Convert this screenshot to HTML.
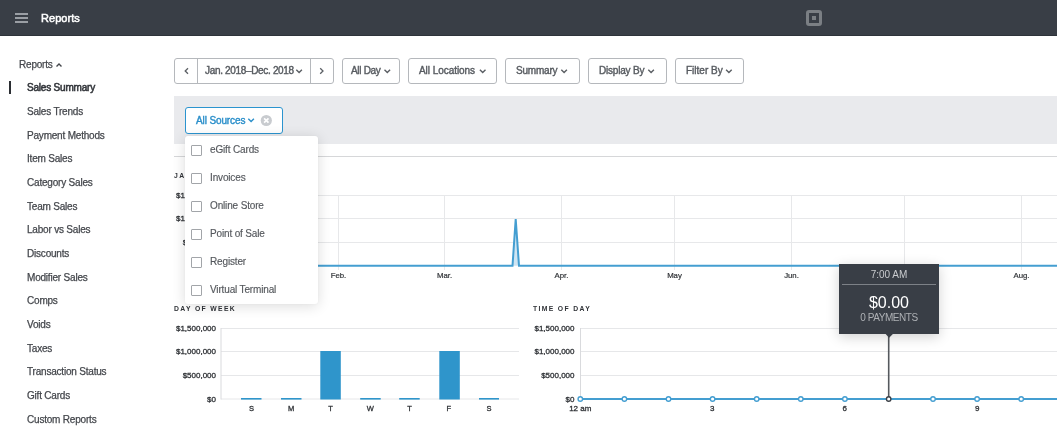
<!DOCTYPE html>
<html><head><meta charset="utf-8">
<style>
*{box-sizing:border-box;margin:0;padding:0}
html,body{width:1057px;height:433px;overflow:hidden;background:#fff;-webkit-font-smoothing:antialiased;font-family:"Liberation Sans",sans-serif;color:#3d3f42}
.abs{position:absolute}
#hdr{position:absolute;left:0;top:0;width:1057px;height:36px;background:#393e46;border-bottom:1px solid #2e333a}
#hdr .t{position:absolute;left:41px;top:12px;font-size:11px;line-height:12px;color:#fff;letter-spacing:0.05px;-webkit-text-stroke:0.5px #fff}
.side{position:absolute;left:27px;font-size:10px;line-height:12px;color:#44474c;white-space:nowrap;letter-spacing:-0.2px;-webkit-text-stroke:0.25px currentColor}
.btn{position:absolute;top:58px;height:26px;border:1px solid #b5b8bc;border-radius:3px;font-size:10px;color:#5b5f64;white-space:nowrap;line-height:24px;background:#fff;padding-left:9px}
.chev{display:inline-block;width:4px;height:4px;border-right:1.3px solid #5b5f64;border-bottom:1.3px solid #5b5f64;transform:rotate(45deg);margin-left:4px;position:relative;top:-2px}
.bt{position:absolute;top:65px;font-size:10px;line-height:12px;color:#575b60;white-space:nowrap;-webkit-text-stroke:0.4px currentColor}
.dd{position:absolute;left:210px;font-size:10px;line-height:12px;color:#55585d;white-space:nowrap;letter-spacing:-0.15px;-webkit-text-stroke:0.15px currentColor}
.cb{position:absolute;left:191px;width:11px;height:11px;border:1px solid #a2a5a9;border-radius:1px;background:#fff}
.abs,.side,.bt,.dd,.btn,#hdr .t{will-change:transform}</style></head><body>
<div id="hdr">
  <div class="abs" style="left:15px;top:13px;width:13px;height:2px;background:#9a9ea4"></div>
  <div class="abs" style="left:15px;top:17px;width:13px;height:2px;background:#9a9ea4"></div>
  <div class="abs" style="left:15px;top:21px;width:13px;height:2px;background:#9a9ea4"></div>
  <div class="t">Reports</div>
  <div class="abs" style="left:806px;top:10px;width:16px;height:16px;border:3px solid #7b7f84;border-radius:3px"></div>
  <div class="abs" style="left:812px;top:16px;width:4px;height:4px;background:#7b7f84"></div>
</div>

<!-- sidebar -->
<div class="side" style="left:19px;top:59px">Reports</div>
<svg class="abs" style="left:55px;top:61px" width="8" height="8"><path d="M1.5 5.5 L4 3 L6.5 5.5" fill="none" stroke="#43464b" stroke-width="1.4"/></svg>
<div class="abs" style="left:9px;top:81px;width:2px;height:13px;background:#2b2e33"></div>
<div class="side" style="top:82px;color:#33363b;letter-spacing:-0.2px;-webkit-text-stroke:0.55px #33363b">Sales Summary</div>
<div class="side" style="top:106px">Sales Trends</div>
<div class="side" style="top:130px">Payment Methods</div>
<div class="side" style="top:153px">Item Sales</div>
<div class="side" style="top:177px">Category Sales</div>
<div class="side" style="top:201px">Team Sales</div>
<div class="side" style="top:224px">Labor vs Sales</div>
<div class="side" style="top:248px">Discounts</div>
<div class="side" style="top:272px">Modifier Sales</div>
<div class="side" style="top:295px">Comps</div>
<div class="side" style="top:319px">Voids</div>
<div class="side" style="top:343px">Taxes</div>
<div class="side" style="top:366px">Transaction Status</div>
<div class="side" style="top:390px">Gift Cards</div>
<div class="side" style="top:414px">Custom Reports</div>

<!-- toolbar -->
<div class="btn" style="left:174px;width:160px"></div>
<div class="abs" style="left:197px;top:58px;width:1px;height:26px;background:#b5b8bc"></div>
<div class="abs" style="left:310px;top:58px;width:1px;height:26px;background:#b5b8bc"></div>
<svg class="abs" style="left:182px;top:67px" width="8" height="8"><path d="M6 1.2 L3.2 4 L6 6.8" fill="none" stroke="#5b5f64" stroke-width="1.3"/></svg>
<svg class="abs" style="left:318px;top:67px" width="8" height="8"><path d="M2.2 1.2 L5 4 L2.2 6.8" fill="none" stroke="#5b5f64" stroke-width="1.3"/></svg>
<div class="btn" style="left:342px;width:58px"></div>
<div class="btn" style="left:408px;width:89px"></div>
<div class="btn" style="left:505px;width:75px"></div>
<div class="btn" style="left:588px;width:79px"></div>
<div class="btn" style="left:675px;width:69px"></div>
<div class="bt" style="left:205px;letter-spacing:-0.33px">Jan. 2018–Dec. 2018</div>
<div class="bt" style="left:351px;letter-spacing:-0.3px">All Day</div>
<div class="bt" style="left:418.5px;letter-spacing:-0.05px">All Locations</div>
<div class="bt" style="left:516.3px;letter-spacing:-0.2px">Summary</div>
<div class="bt" style="left:599px;letter-spacing:-0.2px">Display By</div>
<div class="bt" style="left:685.8px;letter-spacing:0px">Filter By</div>
<svg class="abs" style="left:0;top:0" width="760" height="140">
 <g fill="none" stroke="#5b5f64" stroke-width="1.4">
  <path d="M296.3 69.8 L299.1 72.6 L301.9 69.8"/>
  <path d="M384.5 69.8 L387.3 72.6 L390.1 69.8"/>
  <path d="M479.9 69.8 L482.7 72.6 L485.5 69.8"/>
  <path d="M561.3 69.8 L564.1 72.6 L566.9 69.8"/>
  <path d="M648.3 69.8 L651.1 72.6 L653.9 69.8"/>
  <path d="M726.1 69.8 L728.9 72.6 L731.7 69.8"/>
 </g>
</svg>

<!-- filter band -->
<div class="abs" style="left:174px;top:96px;width:883px;height:48px;background:#e9eaed"></div>
<div class="abs" style="left:185px;top:107px;width:98px;height:27px;border:1px solid #2b94cf;border-radius:3px;background:#fff"></div>
<div class="bt" style="left:196px;top:115px;color:#2b8fca;letter-spacing:-0.12px">All Sources</div>
<svg class="abs" style="left:246px;top:116px" width="10" height="8"><path d="M2.3 2.8 L5.1 5.6 L7.9 2.8" fill="none" stroke="#2b8fca" stroke-width="1.4"/></svg>
<svg class="abs" style="left:260px;top:114px" width="13" height="13"><circle cx="6.3" cy="6.5" r="5.6" fill="#c8cbcf"/><path d="M4.1 4.3 L8.5 8.7 M8.5 4.3 L4.1 8.7" stroke="#fff" stroke-width="1.7"/></svg>

<!-- chart area -->
<svg class="abs" style="left:0;top:0" width="1057" height="433">
  <line x1="174" y1="156.5" x2="1057" y2="156.5" stroke="#d6d7d9" stroke-width="1"/>
  <!-- big chart grid -->
  <g stroke="#e7e8ea" stroke-width="1">
    <line x1="221" y1="195.5" x2="1057" y2="195.5"/>
    <line x1="221" y1="218.5" x2="1057" y2="218.5"/>
    <line x1="221" y1="242.5" x2="1057" y2="242.5"/>
    <line x1="338.5" y1="195" x2="338.5" y2="270"/>
    <line x1="444.5" y1="195" x2="444.5" y2="270"/>
    <line x1="561.5" y1="195" x2="561.5" y2="270"/>
    <line x1="674.5" y1="195" x2="674.5" y2="270"/>
    <line x1="791.5" y1="195" x2="791.5" y2="270"/>
    <line x1="904.5" y1="195" x2="904.5" y2="270"/>
    <line x1="1021.5" y1="195" x2="1021.5" y2="270"/>
  </g>
  <path d="M512.5 265.8 L515.7 219 L519 265.8 Z" fill="#cfe5f3"/>
  <polyline points="221,265.8 512.5,265.8 515.7,219 519,265.8 1057,265.8" fill="none" stroke="#449ed1" stroke-width="2"/>
  <g font-family="Liberation Sans" font-size="7.8" fill="#2f3236" text-anchor="middle" stroke="#2f3236" stroke-width="0.2">
    <text x="338.5" y="278">Feb.</text>
    <text x="444.5" y="278">Mar.</text>
    <text x="561.5" y="278">Apr.</text>
    <text x="674.5" y="278">May</text>
    <text x="791.5" y="278">Jun.</text>
    <text x="904.5" y="278">Jul.</text>
    <text x="1021.5" y="278">Aug.</text>
  </g>
  <g font-family="Liberation Sans" font-size="8" fill="#2f3236" text-anchor="end" stroke="#2f3236" stroke-width="0.3">
    <text x="216" y="198">$1,500,000</text>
    <text x="216" y="221">$1,000,000</text>
    <text x="216" y="245">$500,000</text>
    <text x="216" y="268">$0</text>
  </g>
  <text x="174" y="178" font-family="Liberation Sans" font-size="6.8" font-weight="bold" fill="#303338" letter-spacing="1.35">JAN. 2018–DEC. 2018</text>

  <!-- day of week -->
  <text x="174" y="311.3" font-family="Liberation Sans" font-size="6.8" font-weight="bold" fill="#303338" letter-spacing="1.35">DAY OF WEEK</text>
  <g stroke="#e6e7e9" stroke-width="1">
    <line x1="221" y1="328.5" x2="519" y2="328.5"/>
    <line x1="221" y1="351.5" x2="519" y2="351.5"/>
    <line x1="221" y1="375.5" x2="519" y2="375.5"/>
    <line x1="221" y1="399" x2="519" y2="399"/>
  </g>
  <line x1="221" y1="328" x2="221" y2="399.5" stroke="#d9dadd" stroke-width="1"/>
  <g fill="#2f95cb">
    <rect x="241" y="398" width="20.5" height="1.6"/>
    <rect x="281" y="398" width="20.5" height="1.6"/>
    <rect x="320.3" y="351" width="20.5" height="48.5"/>
    <rect x="360.2" y="398" width="20.5" height="1.6"/>
    <rect x="399.2" y="398" width="20.5" height="1.6"/>
    <rect x="439.3" y="351" width="20.5" height="48.5"/>
    <rect x="479" y="398" width="20" height="1.6"/>
  </g>
  <g font-family="Liberation Sans" font-size="8" fill="#2f3236" text-anchor="end" stroke="#2f3236" stroke-width="0.3">
    <text x="216" y="331">$1,500,000</text>
    <text x="216" y="354">$1,000,000</text>
    <text x="216" y="378">$500,000</text>
    <text x="216" y="401.5">$0</text>
  </g>
  <g font-family="Liberation Sans" font-size="7.5" fill="#2f3236" text-anchor="middle" stroke="#2f3236" stroke-width="0.3">
    <text x="251.4" y="411">S</text>
    <text x="291.2" y="411">M</text>
    <text x="330.5" y="411">T</text>
    <text x="370.3" y="411">W</text>
    <text x="409.6" y="411">T</text>
    <text x="448.9" y="411">F</text>
    <text x="489" y="411">S</text>
  </g>

  <!-- time of day -->
  <text x="533" y="311.3" font-family="Liberation Sans" font-size="6.8" font-weight="bold" fill="#303338" letter-spacing="1.35">TIME OF DAY</text>
  <g stroke="#e6e7e9" stroke-width="1">
    <line x1="580" y1="328.5" x2="1057" y2="328.5"/>
    <line x1="580" y1="351.5" x2="1057" y2="351.5"/>
    <line x1="580" y1="375.5" x2="1057" y2="375.5"/>
  </g>
  <line x1="580.5" y1="328" x2="580.5" y2="399.5" stroke="#d9dadd" stroke-width="1"/>
  <g font-family="Liberation Sans" font-size="8" fill="#2f3236" text-anchor="end" stroke="#2f3236" stroke-width="0.3">
    <text x="574.5" y="331">$1,500,000</text>
    <text x="574.5" y="354">$1,000,000</text>
    <text x="574.5" y="378">$500,000</text>
    <text x="574.5" y="401.5">$0</text>
  </g>
  <g font-family="Liberation Sans" font-size="8" fill="#2f3236" text-anchor="middle" stroke="#2f3236" stroke-width="0.3">
    <text x="580.3" y="411">12 am</text>
    <text x="712.3" y="411">3</text>
    <text x="844.7" y="411">6</text>
    <text x="977.2" y="411">9</text>
  </g>
  <line x1="888.7" y1="334" x2="888.7" y2="399" stroke="#55595e" stroke-width="1.6"/>
  <line x1="580" y1="399" x2="1057" y2="399" stroke="#449ed1" stroke-width="2"/>
  <g fill="#fff" stroke="#449ed1" stroke-width="1.35">
    <circle cx="580.3" cy="399" r="2.25"/>
    <circle cx="624.4" cy="399" r="2.25"/>
    <circle cx="668.5" cy="399" r="2.25"/>
    <circle cx="712.6" cy="399" r="2.25"/>
    <circle cx="756.7" cy="399" r="2.25"/>
    <circle cx="800.8" cy="399" r="2.25"/>
    <circle cx="844.9" cy="399" r="2.25"/>
    <circle cx="933" cy="399" r="2.25"/>
    <circle cx="977.1" cy="399" r="2.25"/>
    <circle cx="1021.2" cy="399" r="2.25"/>
  </g>
  <circle cx="888.7" cy="399" r="2.25" fill="#fff" stroke="#3a3f46" stroke-width="1.35"/>
</svg>

<!-- tooltip -->
<div class="abs" style="left:839px;top:264px;width:100px;height:70px;background:#393e46;box-shadow:0 3px 12px rgba(0,0,0,0.18)">
  <div class="abs" style="left:0;top:4.7px;width:100px;text-align:center;font-size:10px;line-height:12px;color:#c9cbce">7:00 AM</div>
  <div class="abs" style="left:3px;top:20px;width:94px;height:1px;background:#7d8187"></div>
  <div class="abs" style="left:0;top:29.7px;width:100px;text-align:center;font-size:16px;line-height:18px;color:#fff">$0.00</div>
  <div class="abs" style="left:0;top:48px;width:100px;text-align:center;font-size:10px;line-height:12px;color:#aeb1b5;letter-spacing:-0.45px">0 PAYMENTS</div>
</div>
<svg class="abs" style="left:880px;top:330px" width="20" height="10"><path d="M5.2 3.5 L13.4 3.5 L9.1 7.8 Z" fill="#393e46"/></svg>

<!-- dropdown -->
<div class="abs" style="left:185px;top:136px;width:133px;height:167.5px;background:#fff;border-radius:3px;box-shadow:0 2px 14px rgba(0,0,0,0.14),0 0 2px rgba(0,0,0,0.06)"></div>
<div class="cb" style="top:145px"></div><div class="dd" style="top:144px">eGift Cards</div>
<div class="cb" style="top:173px"></div><div class="dd" style="top:172px">Invoices</div>
<div class="cb" style="top:201px"></div><div class="dd" style="top:200px">Online Store</div>
<div class="cb" style="top:229px"></div><div class="dd" style="top:228px">Point of Sale</div>
<div class="cb" style="top:257px"></div><div class="dd" style="top:256px">Register</div>
<div class="cb" style="top:285px"></div><div class="dd" style="top:284px">Virtual Terminal</div>

</body></html>
